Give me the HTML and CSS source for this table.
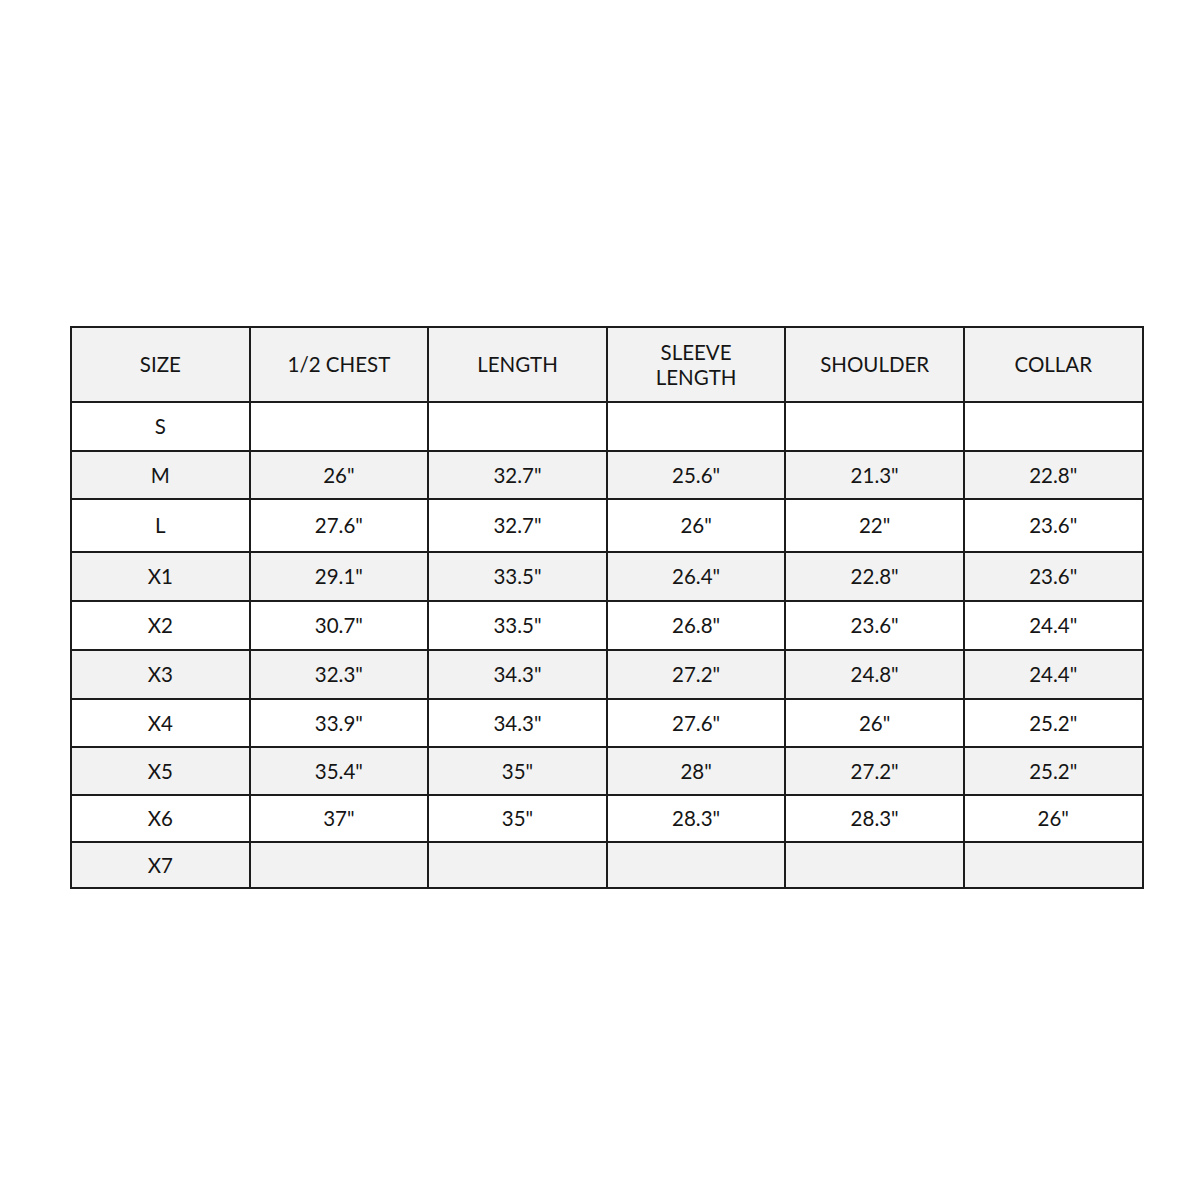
FILE: index.html
```html
<!DOCTYPE html>
<html>
<head>
<meta charset="utf-8">
<link rel="stylesheet" href="styles.css">
</head>
<body>
<table class="chart">
  <colgroup>
    <col class="c"><col class="c"><col class="c"><col class="c"><col class="c"><col class="c">
  </colgroup>
  <tr class="head"><th>SIZE</th><th>1/2 CHEST</th><th>LENGTH</th><th>SLEEVE<br>LENGTH</th><th>SHOULDER</th><th>COLLAR</th></tr>
  <tr class="r49"><td>S</td><td></td><td></td><td></td><td></td><td></td></tr>
  <tr class="r48 alt"><td>M</td><td>26"</td><td>32.7"</td><td>25.6"</td><td>21.3"</td><td>22.8"</td></tr>
  <tr class="r53"><td>L</td><td>27.6"</td><td>32.7"</td><td>26"</td><td>22"</td><td>23.6"</td></tr>
  <tr class="r49 alt"><td>X1</td><td>29.1"</td><td>33.5"</td><td>26.4"</td><td>22.8"</td><td>23.6"</td></tr>
  <tr class="r49"><td>X2</td><td>30.7"</td><td>33.5"</td><td>26.8"</td><td>23.6"</td><td>24.4"</td></tr>
  <tr class="r49 alt"><td>X3</td><td>32.3"</td><td>34.3"</td><td>27.2"</td><td>24.8"</td><td>24.4"</td></tr>
  <tr class="r48"><td>X4</td><td>33.9"</td><td>34.3"</td><td>27.6"</td><td>26"</td><td>25.2"</td></tr>
  <tr class="r48 alt"><td>X5</td><td>35.4"</td><td>35"</td><td>28"</td><td>27.2"</td><td>25.2"</td></tr>
  <tr class="r47"><td>X6</td><td>37"</td><td>35"</td><td>28.3"</td><td>28.3"</td><td>26"</td></tr>
  <tr class="r46 alt"><td>X7</td><td></td><td></td><td></td><td></td><td></td></tr>
</table>
</body>
</html>
```

FILE: styles.css
```css
html, body {
  margin: 0;
  padding: 0;
  background: #ffffff;
}
body {
  padding-top: 326px;
  padding-left: 70px;
  font-family: Lato, "Open Sans", sans-serif;
  color: #151515;
}
.chart {
  border-collapse: collapse;
  table-layout: fixed;
  width: 1072px;
}
.chart .c { width: 178.6px; }
.chart th, .chart td {
  border: 2px solid #1c1c1c;
  padding: 0;
  text-align: center;
  vertical-align: middle;
  font-size: 20.5px;
  font-weight: 400;
  line-height: 25px;
}
.head { background: #f2f2f2; height: 75px; }
.alt { background: #f2f2f2; }
.r46 { height: 46px; }
.r47 { height: 47px; }
.r48 { height: 48px; }
.r49 { height: 49px; }
.r53 { height: 53px; }
```
